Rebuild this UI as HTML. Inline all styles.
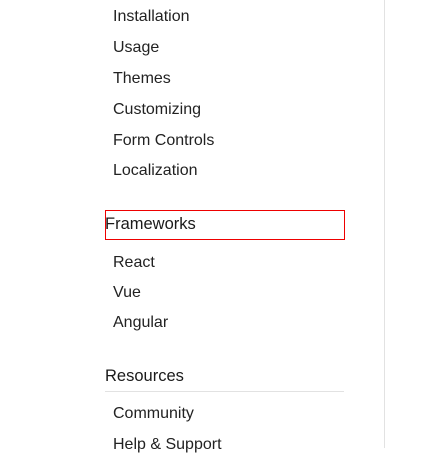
<html><head><style>
body{margin:0;width:448px;height:448px;background:#fff;position:relative;overflow:hidden;font-family:"Liberation Sans",sans-serif;color:#222;}
.t{position:absolute;font-size:16px;line-height:18px;white-space:nowrap}
.i{left:113px}
.h{left:105px;color:#1a1a1a;font-size:16.5px}
</style></head><body>
<div style="position:absolute;left:384px;top:0;width:1px;height:448px;background:#e2e2e2"></div>
<div class="t i" style="top:8px">Installation</div>
<div class="t i" style="top:39px">Usage</div>
<div class="t i" style="top:70px">Themes</div>
<div class="t i" style="top:101px">Customizing</div>
<div class="t i" style="top:132px">Form Controls</div>
<div class="t i" style="top:162px">Localization</div>
<div style="position:absolute;left:105px;top:210px;width:238px;height:28px;border:1px solid #e00"></div>
<div class="t h" style="top:215px">Frameworks</div>
<div class="t i" style="top:254px">React</div>
<div class="t i" style="top:284px">Vue</div>
<div class="t i" style="top:314px">Angular</div>
<div class="t h" style="top:367px">Resources</div>
<div style="position:absolute;left:105px;top:391px;width:239px;height:1px;background:#e2e2e2"></div>
<div class="t i" style="top:405px">Community</div>
<div class="t i" style="top:436px">Help &amp; Support</div>
</body></html>
